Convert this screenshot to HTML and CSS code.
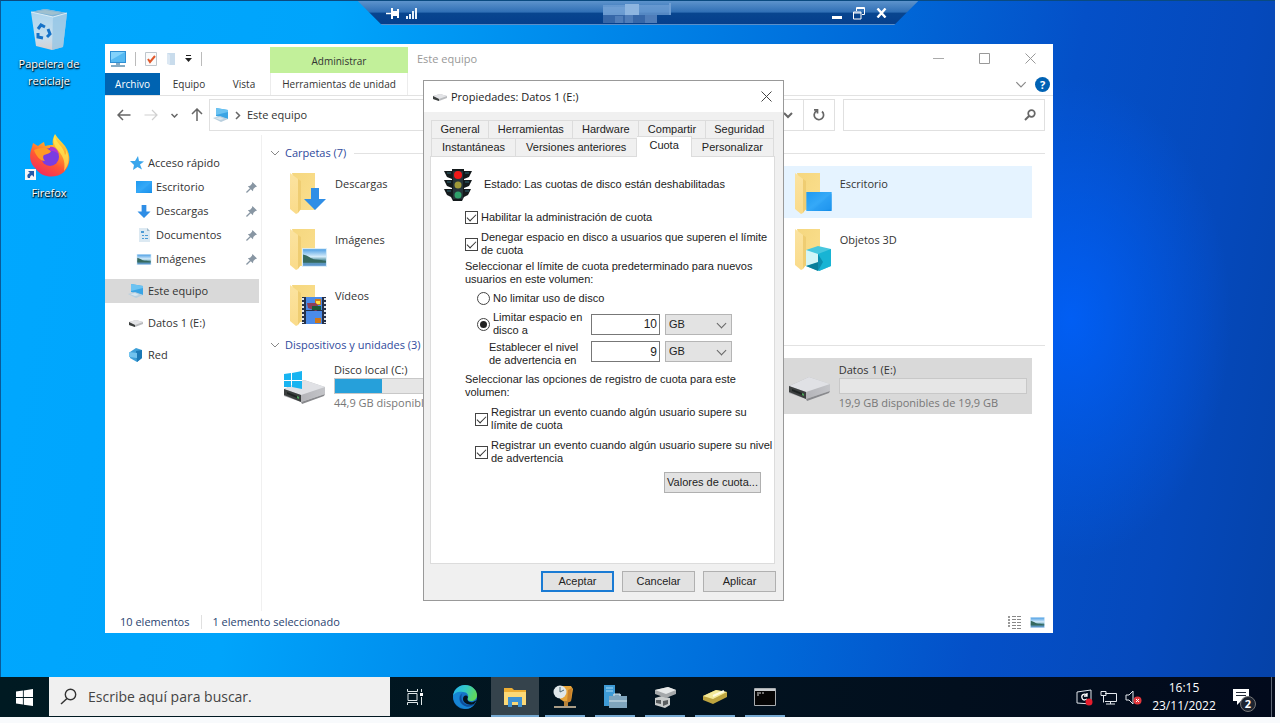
FILE: index.html
```html
<!DOCTYPE html>
<html lang="es">
<head>
<meta charset="utf-8">
<title>Propiedades: Datos 1 (E:)</title>
<link rel="stylesheet" href="styles.css">
</head>
<body>
<svg class="defs" aria-hidden="true">
  <defs>
    <linearGradient id="gFolder" x1="0" y1="0" x2="1" y2="1"><stop offset="0" stop-color="#f5d77f"/><stop offset="1" stop-color="#fbdf8e"/></linearGradient>
    <linearGradient id="gFlap" x1="0" y1="0" x2="0" y2="1"><stop offset="0" stop-color="#fbe3a0"/><stop offset="1" stop-color="#fadb8a"/></linearGradient>
    <linearGradient id="gScreen" x1="0" y1="0" x2="1" y2="1"><stop offset="0" stop-color="#1f9af0"/><stop offset=".5" stop-color="#35a9f8"/><stop offset="1" stop-color="#118ae6"/></linearGradient>
    <linearGradient id="gPhoto" x1="0" y1="0" x2="0" y2="1"><stop offset="0" stop-color="#4f9fe4"/><stop offset=".45" stop-color="#d5ecfa"/><stop offset=".65" stop-color="#5c97a5"/><stop offset="1" stop-color="#5b95d0"/></linearGradient>
    <linearGradient id="gDisk" x1="0" y1="0" x2="1" y2="0"><stop offset="0" stop-color="#a8a8ad"/><stop offset="1" stop-color="#c4c5c9"/></linearGradient>
    <linearGradient id="gFox" x1=".8" y1="0" x2=".3" y2="1"><stop offset="0" stop-color="#fff04a"/><stop offset=".35" stop-color="#ffa52a"/><stop offset=".65" stop-color="#ff5634"/><stop offset="1" stop-color="#f02a5f"/></linearGradient>
    <linearGradient id="gBin" x1="0" y1="0" x2="0" y2="1"><stop offset="0" stop-color="#a8d3ee"/><stop offset=".7" stop-color="#c8dfee"/><stop offset="1" stop-color="#d6cfd0"/></linearGradient>
    <linearGradient id="gEdge" x1="0" y1=".2" x2="1" y2=".5"><stop offset="0" stop-color="#25b5ea"/><stop offset=".5" stop-color="#35c9c5"/><stop offset="1" stop-color="#62d957"/></linearGradient>

    <symbol id="folder" viewBox="0 0 40 44">
      <path d="M4 1h23v37H12z" fill="url(#gFolder)"/>
      <path d="M2 1l8 6v34l-2 1-6-5z" fill="url(#gFlap)"/>
      <path d="M10 7v34l3-4V9z" fill="#efcd72"/>
    </symbol>
    <symbol id="screen" viewBox="0 0 16 12"><path d="M0 0h16v12H0z" fill="url(#gScreen)"/><path d="M16 1v10L4 12z" fill="#2a9ef3" opacity=".5"/></symbol>
    <symbol id="down" viewBox="0 0 22 22"><path d="M7 0h8v11h7L11 22 0 11h7z" fill="#2f8ee6"/></symbol>
    <symbol id="photo" viewBox="0 0 24 18">
      <path d="M0 0h24v18H0z" fill="#d7ecf9"/><path d="M1 1h22v16H1z" fill="url(#gPhoto)"/>
      <path d="M1 6c5 1 7 4 12 5 4 0 7 1 10 1v2H1z" fill="#35695f"/>
    </symbol>
    <symbol id="disk" viewBox="0 0 42 28">
      <path d="M0 12L20 3l21 7v7L17 25 0 19z" fill="url(#gDisk)"/>
      <path d="M0 12L20 3l21 7-24 8z" fill="#e0e1e5"/>
      <path d="M0 12l17 6v7L0 18z" fill="#3c3f3f"/><path d="M3 15l10 4v2L3 17z" fill="#1f2423"/><path d="M13 19l2 1v2l-2-1z" fill="#4aa457"/>
      <path d="M17 25l24-8-1 2-22 8z" fill="#88898d"/>
    </symbol>
    <symbol id="disk-small" viewBox="0 0 14 8">
      <path d="M0 3l7-2 7 2v2L6 8 0 6z" fill="#b9bbbe"/><path d="M0 3l7-2 7 2-8 3z" fill="#e3e4e7"/><path d="M0 3l6 3v2L0 6z" fill="#3b3f3e"/>
    </symbol>
    <symbol id="pc" viewBox="0 0 16 16">
      <path d="M3 1l12 2v9L3 9z" fill="#3aa4e4"/><path d="M3 1l12 2v2L3 8z" fill="#6cc3f2"/>
      <path d="M0 11l7-2 8 3-7 3z" fill="#b9cfde"/><path d="M2 11l5-1 4 2-4 1z" fill="#d9e6ee"/>
    </symbol>
    <symbol id="pin" viewBox="0 0 12 12"><path d="M7 0l5 5-2 .6-2 2L7.600 10 5.200 7.900 1 12 0 11l4.200-4.200L2 4.500 4.500 4 6.500 2z" fill="#8896a3"/></symbol>
    <symbol id="chev" viewBox="0 0 10 6"><path d="M1 1l4 4 4-4" fill="none" stroke="currentColor"/></symbol>
    <symbol id="winlogo" viewBox="0 0 16 16"><path d="M0 2.300l6.500-.9v6.200H0zM7.300 1.300L16 0v7.600H7.300zM0 8.400h6.500v6.200L0 13.700zM7.300 8.400H16V16l-8.700-1.200z" fill="currentColor"/></symbol>
  </defs>
</svg>

<main class="desktop">
  <a class="shortcut shortcut-bin" href="#bin">
    <svg width="42" height="44" viewBox="0 0 42 44">
      <path d="M3 4l14-3 22 4-4 34-11 3-16-4z" fill="url(#gBin)"/>
      <path d="M3 4l14-3 22 4-14 4z" fill="#7fb4d6"/><path d="M7 4l10-2 17 3-10 2z" fill="#9fc0cf"/>
      <path d="M25 9l14-4-4 34-11 3z" fill="#93c4e4" opacity=".75"/>
      <path d="M3 4l22 5 14-4" fill="none" stroke="#dcecf5"/>
      <g fill="none" stroke="#1672c8" stroke-width="3"><path d="M10 21l3-4 4 2M20 21l2 5-3 3M15 30l-5-1 0-4"/></g>
    </svg>
    <span>Papelera de reciclaje</span>
  </a>
  <a class="shortcut shortcut-firefox" href="#firefox">
    <svg width="48" height="48" viewBox="0 0 48 48">
      <path d="M30 1c3 5 6 7 10 12 7 10 5 20-1 26-8 7-22 6-28-3C4 30 4 21 7 14l1-4 5 3c2-2 4-3 6-4l1 4c3-1 5-1 8-1-1-4 0-7 2-11z" fill="url(#gFox)"/>
      <circle cx="25" cy="24" r="9" fill="#7a3de0"/>
      <path d="M9 17c5-2 8-2 12-2l5 3c-1 3-5 3-7 4-2 2 0 5 1 6-5 0-9-5-11-11z" fill="#ff9a25"/>
      <path d="M25 14c5-1 8 3 9 8-3-4-6-4-9-4z" fill="#b136cf"/>
      <path d="M30 2c0 8 9 11 10 20 2-2 1-4 0-7 5 8 5 16-1 23 2-11-2-16-7-22-4-5-4-9-2-14z" fill="#fff15a" opacity=".65"/>
      <path d="M0 36h11v11H0z" fill="#f4f6f8"/><path d="M3 38h6v6l-2-2c-2 1-2 2-2 3H3c-1-2-1-4 2-5z" fill="#2459a8"/>
    </svg>
    <span>Firefox</span>
  </a>

  <section class="explorer" aria-label="Este equipo">
    <header class="titlebar">
      <div class="quick">
        <svg width="18" height="16" viewBox="0 0 18 16"><path d="M1 0h16v12H1z" fill="#2f8fd4"/><path d="M2 1h14v10H2z" fill="#55b9f2"/><path d="M2 1h14L2 9z" fill="#83d2fb"/><path d="M7 12h4v2H7zM2 14h14v2H2z" fill="#85abc4"/></svg>
        <i class="bar"></i>
        <svg class="q-check" width="12" height="14" viewBox="0 0 12 14"><path d="M.5.500h11v13H.500z" fill="#fbfbfb" stroke="#bfc6cc"/><path d="M3 7l2 3 5-6" fill="none" stroke="#e0592c" stroke-width="2"/></svg>
        <svg width="10" height="14" viewBox="0 0 10 14"><path d="M1 1h8v12H3z" fill="#c9dcec"/><path d="M1 1l3 2v10l-3-1z" fill="#dce8f3"/></svg>
        <svg width="7" height="7" viewBox="0 0 7 7"><path d="M1 0h5v1H1zM0 3h7L3.500 7z" fill="#222"/></svg>
        <i class="bar"></i>
      </div>
      <div class="context-title">Administrar</div>
      <h1>Este equipo</h1>
      <div class="caption">
        <button aria-label="Minimizar"><svg width="11" height="11" viewBox="0 0 11 11"><path d="M0 5.500h11" stroke="#aaa"/></svg></button>
        <button aria-label="Maximizar"><svg width="11" height="11" viewBox="0 0 11 11"><path d="M.5.500h10v10H.500z" fill="none" stroke="#999"/></svg></button>
        <button aria-label="Cerrar"><svg width="11" height="11" viewBox="0 0 11 11"><path d="M.5.500l10 10M10.500.500l-10 10" stroke="#999"/></svg></button>
      </div>
    </header>
    <nav class="ribbon">
      <button class="file-tab">Archivo</button>
      <button class="tab-equipo">Equipo</button>
      <button class="tab-vista">Vista</button>
      <button class="tab-tools">Herramientas de unidad</button>
      <span class="grow"></span>
      <svg class="ribbon-chev" width="12" height="7"><use href="#chev"/></svg>
      <button class="help" aria-label="Ayuda">?</button>
    </nav>
    <div class="address">
      <div class="arrows">
        <svg width="14" height="12" viewBox="0 0 14 12"><path d="M13.500 6H1M6 1L1 6l5 5" fill="none" stroke="#666" stroke-width="1.500"/></svg>
        <svg width="14" height="12" viewBox="0 0 14 12"><path d="M.5 6H13M8 1l5 5-5 5" fill="none" stroke="#d0d0d0" stroke-width="1.200"/></svg>
        <svg width="7" height="5" viewBox="0 0 7 5"><path d="M.5 1l3 3 3-3" fill="none" stroke="#666" stroke-width="1.500"/></svg>
        <svg width="12" height="14" viewBox="0 0 12 14"><path d="M6 13V1M1 6l5-5 5 5" fill="none" stroke="#666" stroke-width="1.500"/></svg>
      </div>
      <div class="path">
        <svg width="16" height="16"><use href="#pc"/></svg>
        <svg width="6" height="9" viewBox="0 0 6 9"><path d="M1 1l3.500 3.500L1 8" fill="none" stroke="#666" stroke-width="1.500"/></svg>
        <span>Este equipo</span>
        <span class="grow"></span>
        <svg width="10" height="7" viewBox="0 0 10 7"><path d="M1 1l4 4 4-4" fill="none" stroke="#666" stroke-width="2"/></svg>
        <button class="refresh" aria-label="Actualizar"><svg width="12" height="12" viewBox="0 0 12 12"><path d="M9 2.500A4.700 4.700 0 1 1 3.500 2M1 .8h3.500v3.700" fill="none" stroke="#666" stroke-width="1.700"/></svg></button>
      </div>
      <div class="search">
        <input type="text" aria-label="Buscar en Este equipo">
        <svg width="12" height="12" viewBox="0 0 12 12"><circle cx="7.500" cy="4.500" r="3.300" fill="none" stroke="#666" stroke-width="1.700"/><path d="M5 7L1 11" stroke="#666" stroke-width="2"/></svg>
      </div>
    </div>
    <div class="panes">
      <nav class="tree">
        <a href="#rapido"><svg width="14" height="14" viewBox="0 0 14 14"><path d="M8 0l1 5 5 .5-4 3 2 5-4.500-2.500L3 14l1-5-4-4 5 0z" fill="#3aa6ec"/></svg>Acceso rápido</a>
        <a class="sub" href="#escritorio"><svg width="16" height="12"><use href="#screen"/></svg>Escritorio<svg class="pin" width="11" height="11"><use href="#pin"/></svg></a>
        <a class="sub" href="#descargas"><svg width="16" height="13"><use href="#down"/></svg>Descargas<svg class="pin" width="11" height="11"><use href="#pin"/></svg></a>
        <a class="sub" href="#documentos"><svg width="16" height="14" viewBox="0 0 16 14"><path d="M3 0h8l3 3v11H3z" fill="#dce9f2"/><path d="M11 0v3h3z" fill="#9fb9cb"/><path d="M5 3h3v2H5zM6 7h2v1H6zM9 7h3v1H9zM6 10h2v1H6zM9 10h3v1H9z" fill="#4d9bd5"/></svg>Documentos<svg class="pin" width="11" height="11"><use href="#pin"/></svg></a>
        <a class="sub" href="#imagenes"><svg width="16" height="11"><use href="#photo"/></svg>Imágenes<svg class="pin" width="11" height="11"><use href="#pin"/></svg></a>
        <a class="root current" href="#equipo"><svg width="16" height="16"><use href="#pc"/></svg>Este equipo</a>
        <a class="root" href="#datos"><svg width="16" height="8"><use href="#disk-small"/></svg>Datos 1 (E:)</a>
        <a class="root" href="#red"><svg width="16" height="14" viewBox="0 0 16 14"><path d="M2 4l6-4 6 2v8l-5 4-7-4z" fill="#3d9fd8"/><path d="M8 3l6-1v8l-5 4z" fill="#1b79b6"/><path d="M1 4l8 1v5l-8-1z" fill="#72c3ee"/></svg>Red</a>
      </nav>
      <div class="files">
        <h2><svg width="10" height="6"><use href="#chev"/></svg>Carpetas (7)</h2>
        <div class="grid">
          <a class="item" href="#i1"><svg width="40" height="44" viewBox="0 0 40 44"><use href="#folder" width="40" height="44"/><use href="#down" x="16" y="16" width="22" height="22"/></svg><span>Descargas</span></a>
          <a class="item third hover" href="#i2"><svg width="40" height="44" viewBox="0 0 40 44"><use href="#folder" width="40" height="44"/><use href="#screen" x="13" y="20" width="26" height="19"/></svg><span>Escritorio</span></a>
          <a class="item first" href="#i3"><svg width="40" height="44" viewBox="0 0 40 44"><use href="#folder" width="40" height="44"/><use href="#photo" x="14" y="20" width="25" height="19"/></svg><span>Imágenes</span></a>
          <a class="item third" href="#i4"><svg width="40" height="44" viewBox="0 0 40 44"><use href="#folder" width="40" height="44"/><path d="M13 22l12-4 13 3v17l-12 5-13-5z" fill="#48c7de"/><path d="M13 22l12 4v9l-12 3z" fill="#d3f5f7"/><path d="M25 26l13-5v17l-12 5z" fill="#18b4d4"/><path d="M13 38l12-4v9z" fill="#087f9b"/><path d="M25 26l5 8-5 9z" fill="#0d8fb0"/></svg><span>Objetos 3D</span></a>
          <a class="item first" href="#i5"><svg width="40" height="44" viewBox="0 0 40 44"><use href="#folder" width="40" height="44"/><path d="M14 13h24v27H14z" fill="#263149"/><path d="M18 13h16v13H18zM18 27h16v13H18z" fill="#4b8be8"/><path d="M15 14v25M37 14v25" stroke="#dfe6ee" stroke-width="2" stroke-dasharray="2 2"/><path d="M27 15h6v6h-6zM27 34h6v5h-6z" fill="#cf7718"/><path d="M28 17h4v3h-4z" fill="#ffe14a"/><path d="M19 19h9l4 5-4 3-8-3z" fill="#8d3f59"/><path d="M24 22h9v4h-9z" fill="#1d5a39"/></svg><span>Vídeos</span></a>
        </div>
        <h2><svg width="10" height="6"><use href="#chev"/></svg>Dispositivos y unidades (3)</h2>
        <div class="grid drives">
          <a class="item" href="#c"><svg width="42" height="34" viewBox="0 0 42 34"><use href="#disk" y="6" width="42" height="28"/><path d="M0 3l7-1v7H0zM8 2l10-2v9H8zM0 10h7v6H0zM8 10h10v8L8 16z" fill="#18b4f1"/></svg><span class="drive"><span>Disco local (C:)</span><span class="usage" role="meter" aria-label="Espacio usado en C:" aria-valuenow="25"><i style="width:25%"></i></span><small>44,9 GB disponibles</small></span></a>
          <a class="item third selected" href="#e"><svg width="42" height="28"><use href="#disk"/></svg><span class="drive"><span>Datos 1 (E:)</span><span class="usage" role="meter" aria-label="Espacio usado en E:" aria-valuenow="0"><i style="width:0%"></i></span><small>19,9 GB disponibles de 19,9 GB</small></span></a>
        </div>
      </div>
    </div>
    <footer class="status">
      <span>10 elementos</span><i></i><span>1 elemento seleccionado</span><span class="grow"></span>
      <svg width="15" height="14" viewBox="0 0 15 14"><path d="M2 1v12" stroke="#999" stroke-width="2" stroke-dasharray="2 1"/><path d="M5 1.500h10M5 4.500h10M5 7.500h10M5 10.500h10M5 13.500h10" stroke="#888" stroke-dasharray="4 1"/></svg>
      <svg width="15" height="11"><use href="#photo"/></svg>
    </footer>
  </section>

  <section class="dialog" role="dialog" aria-label="Propiedades: Datos 1 (E:)">
    <header>
      <svg width="14" height="8"><use href="#disk-small"/></svg>
      <h2>Propiedades: Datos 1 (E:)</h2>
      <button aria-label="Cerrar"><svg width="11" height="11" viewBox="0 0 11 11"><path d="M.5.500l10 10M10.500.500l-10 10" stroke="#444"/></svg></button>
    </header>
    <div class="sheet">
      <div class="tabs tabs-back" role="tablist"><button role="tab">General</button><button role="tab">Herramientas</button><button role="tab">Hardware</button><button role="tab">Compartir</button><button role="tab">Seguridad</button></div>
      <div class="tabs tabs-front" role="tablist"><button role="tab">Instantáneas</button><button role="tab">Versiones anteriores</button><button role="tab" aria-selected="true" class="active">Cuota</button><button role="tab">Personalizar</button></div>
      <form class="panel">
        <div class="state">
          <svg width="28" height="34" viewBox="0 0 28 34">
            <path d="M8 1h12v2h8l-3 6-5 2v1h8l-3 6-5 2v1h7l-3 6-4 2-2 4H9l-2-4-4-2-3-6h8v-1l-5-2-3-6h8v-1L3 9 0 3h8z" fill="#141a1c"/>
            <path d="M9 3h10v28H9z" fill="#26343a"/>
            <circle cx="14" cy="7" r="4" fill="#f01818"/><circle cx="14" cy="17" r="3.500" fill="#a09a38"/><circle cx="14" cy="27" r="3.500" fill="#2fa06a"/><path d="M3 5h4M3 14h4M3 23h4M21 5h4M21 14h4M21 23h4" stroke="#2f6673"/>
          </svg>
          <span>Estado: Las cuotas de disco están deshabilitadas</span>
        </div>
        <label class="check enable"><input type="checkbox" checked><span>Habilitar la administración de cuota</span></label>
        <label class="check deny"><input type="checkbox" checked><span>Denegar espacio en disco a usuarios que superen el límite<br>de cuota</span></label>
        <p class="intro">Seleccionar el límite de cuota predeterminado para nuevos<br>usuarios en este volumen:</p>
        <label class="check radio"><input type="radio" name="limit"><span>No limitar uso de disco</span></label>
        <div class="limit">
          <label class="check"><input type="radio" name="limit" checked><span>Limitar espacio en<br>disco a</span></label>
          <input type="text" value="10" aria-label="Límite de espacio">
          <span class="select"><select aria-label="Unidad del límite"><option>GB</option></select></span>
        </div>
        <div class="limit warn">
          <label for="warn">Establecer el nivel<br>de advertencia en</label>
          <input type="text" id="warn" value="9">
          <span class="select"><select aria-label="Unidad de advertencia"><option>GB</option></select></span>
        </div>
        <p class="log">Seleccionar las opciones de registro de cuota para este<br>volumen:</p>
        <label class="check event"><input type="checkbox" checked><span>Registrar un evento cuando algún usuario supere su<br>límite de cuota</span></label>
        <label class="check event"><input type="checkbox" checked><span>Registrar un evento cuando algún usuario supere su nivel<br>de advertencia</span></label>
        <button type="button" class="btn values">Valores de cuota...</button>
      </form>
    </div>
    <footer><button class="btn default">Aceptar</button><button class="btn">Cancelar</button><button class="btn">Aplicar</button></footer>
  </section>

  <div class="remote">
    <svg width="13" height="11" viewBox="0 0 13 11"><path d="M0 5.500h5" stroke="#fff" stroke-width="1.500"/><path d="M5 0h2v3h4V1h2v9h-2V8H7v3H5z" fill="#fff"/></svg>
    <svg width="12" height="11" viewBox="0 0 12 11"><path d="M0 8h2v3H0zM3 6h2v5H3zM6 3h2v8H6zM9 0h2v11H9z" fill="#e8f1fa"/></svg>
    <svg class="mosaic" width="76" height="20" viewBox="0 0 76 20"><path d="M0 4h22v8H0zM66 0h2v12h-2z" fill="#7fa8d8" opacity=".7"/><path d="M0 2h68v10H0z" fill="#6f9fd4" opacity=".75"/><path d="M22 1h14v11H22z" fill="#8db5e0"/><path d="M0 12h54v8H0z" fill="#3667a8"/><path d="M12 13h8v7h-8zM22 12h8v8h-8zM42 12h12v8H42z" fill="#4f7db9"/></svg>
    <svg width="10" height="11" viewBox="0 0 10 11"><path d="M0 8h10v3H0z" fill="#fff"/></svg>
    <svg width="12" height="13" viewBox="0 0 12 13"><path d="M3.500 4V.500h8v7H9M.5 5h7.500v7H.500zM3 1.500h8M0 6h8" fill="none" stroke="#fff"/></svg>
    <svg width="11" height="10" viewBox="0 0 11 10"><path d="M1.500.500l8 9M9.500.500l-8 9" stroke="#fff" stroke-width="2.400"/></svg>
  </div>
</main>

<footer class="taskbar">
  <button class="start" aria-label="Inicio"><svg width="17" height="17"><use href="#winlogo"/></svg></button>
  <label class="tb-search"><svg width="17" height="17" viewBox="0 0 17 17"><circle cx="10.500" cy="6.500" r="5.200" fill="none" stroke="#333" stroke-width="1.400"/><path d="M7 10.500L1 16" stroke="#333" stroke-width="1.500"/></svg><input type="text" placeholder="Escribe aquí para buscar." aria-label="Buscar"></label>
  <div class="apps">
    <button aria-label="Vista de tareas"><svg width="18" height="16" viewBox="0 0 18 16"><path d="M2 4.500h9v7H2zM1.500 0v2.500h10V0M1.500 16v-2.500h10V16M15.500 0v3M15.500 8v8" fill="none" stroke="#dfe6e8"/><path d="M14 4h3v3h-3z" fill="#fff"/></svg></button>
    <button aria-label="Edge"><svg width="26" height="26" viewBox="0 0 26 26"><circle cx="13" cy="13" r="12" fill="#1574c8"/><path d="M1 12C2 5 7 1 13 1c7 0 12 5 12 10 0 4-3 6-6 6s-4-1-3-3c1-3-1-6-5-6-5 0-9 2-10 4z" fill="url(#gEdge)"/><path d="M11 8c-4 2-5 6-3 10 2 4 7 6 14 3-3 4-9 5-14 2-4-2-7-6-7-11 2-4 6-5 10-4z" fill="#1685d4"/><path d="M10 10c-2 5 1 10 6 11 2 0 4 0 7-2-5 7-13 3-15-2-1-3 0-6 2-7z" fill="#0d4d9c"/><path d="M16 13c-2 3 1 6 5 5l4-2-3 4c-5 2-11-1-11-5 0-3 3-5 5-2z" fill="#05131e"/></svg></button>
    <button class="open active" aria-label="Explorador de archivos"><svg width="22" height="20" viewBox="0 0 22 20"><path d="M0 1h8l2 2h12v15H0z" fill="#edae34"/><path d="M0 5h22v13H0z" fill="#fcd976"/><path d="M4 10h14v10h-4v-5H8v5H4z" fill="#3f92d2"/></svg></button>
    <button class="open" aria-label="Programador"><svg width="24" height="26" viewBox="0 0 24 26"><path d="M7 2h11l2 3-2 12-5 2-6-4z" fill="#e8a53a"/><path d="M15 6l4-2-1 13-4 2z" fill="#c8812a"/><circle cx="7" cy="8" r="6.500" fill="#dfe7ea"/><path d="M7 3v5l4-2" fill="none" stroke="#4d6874"/><path d="M11 17h4v5h-4z" fill="#b78238"/><path d="M1 22h22v2H1z" fill="#a99c86"/></svg></button>
    <button class="open" aria-label="Administrador del servidor"><svg width="26" height="24" viewBox="0 0 26 24"><path d="M2 0h11v21H2z" fill="#3e9bd6"/><path d="M4 3h7M4 6h7" stroke="#a7daf6"/><path d="M11 11V9h8v2h6v12H7V11z" fill="#7fa5bd"/><path d="M7 16h18" stroke="#d5e6ee"/><path d="M12 11V9h6v2" fill="none" stroke="#d5e6ee"/></svg></button>
    <button class="open" aria-label="Almacenamiento"><svg width="24" height="22" viewBox="0 0 24 22"><path d="M2 12l7-2 8 2v7l-5 3-10-3z" fill="#c9cccc"/><path d="M3 14h5v4l-5-1zM10 15l5-1v4l-5 2z" fill="#5a5e60"/><path d="M2 4l13-3 8 3v4l-10 4-11-4z" fill="#a5a8aa"/><path d="M2 4l13-3 8 3-10 4z" fill="#e6e8e8"/></svg></button>
    <button class="open" aria-label="Disco"><svg width="26" height="18" viewBox="0 0 26 18"><path d="M1 8L14 2l11 2v5L11 16 1 12z" fill="#bda43f"/><path d="M1 8L14 2l11 2-14 7z" fill="#f3e999"/><path d="M11 8l11-5" stroke="#fffbe0" stroke-width="2"/></svg></button>
    <button class="open" aria-label="Símbolo del sistema"><svg width="22" height="18" viewBox="0 0 22 18"><path d="M.5.500h21v17H.500z" fill="#050505" stroke="#a9adb0"/><path d="M1 1h20v2H1z" fill="#c9cdd0"/><path d="M3 5h4M3 7h2M8 5h2" stroke="#ddd"/></svg></button>
  </div>
  <div class="tray">
    <svg width="17" height="17" viewBox="0 0 17 17"><path d="M1 3l14-2v14L1 14z" fill="none" stroke="#dfe4ea"/><path d="M11 6c-3-2-6 0-5 3s3 2 5 1M11 4v3H8" fill="none" stroke="#fff" stroke-width="1.300"/><circle cx="13" cy="13" r="3.500" fill="#e51c2c"/></svg>
    <svg width="18" height="15" viewBox="0 0 18 15"><path d="M5 3.500h11.500v8H5M1 1.500h5v4H1zM3.500 6v6.500M10.500 12v2M6 14h9" fill="none" stroke="#e4e8ee"/></svg>
    <svg width="17" height="15" viewBox="0 0 17 15"><path d="M1 5h3l4-4v13L4 10H1z" fill="none" stroke="#e4e8ee"/><circle cx="12.500" cy="10.500" r="4" fill="#e2363c"/><path d="M11 9l3 3M14 9l-3 3" stroke="#fff"/></svg>
    <time class="clock">16:15<br>23/11/2022</time>
    <button class="notices" aria-label="Notificaciones"><svg width="18" height="18" viewBox="0 0 18 18"><path d="M1 1h16v12H9l-4 4v-4H1z" fill="#fff"/><path d="M4 4.500h10M4 7.500h10" stroke="#222a38"/></svg><b>2</b></button>
  </div>
</footer>
</body>
</html>
```
FILE: styles.css
```css
* { box-sizing: border-box; }
body {
  margin: 0;
  height: 100vh;
  padding: 0 5px 6px 0;
  display: flex;
  flex-direction: column;
  background: #f8fafc;
  font: 11px/16px "Open Sans", "Noto Sans", sans-serif;
  color: #333;
}
button, input, select { font: inherit; color: inherit; margin: 0; }
button { padding: 0; border: 0; background: none; }
a { color: inherit; text-decoration: none; }
svg { display: block; flex: none; }
h1, h2, p { margin: 0; font-size: 11px; font-weight: 400; }
.defs { position: absolute; width: 0; height: 0; }
.grow { flex: 1; }

.desktop {
  position: relative;
  flex: 1;
  overflow: hidden;
  border-top: 1px solid #0a4a80;
  border-left: 1px solid #0a5a98;
  background:
    radial-gradient(ellipse 160px 240px at 84% 47%, rgba(0, 98, 255, .8), rgba(0, 98, 255, 0)),
    linear-gradient(100deg, #00a8ff 0%, #00a4fb 24%, #0085e8 45%, #0068d8 64%, #0450c8 78%, #0549bc 90%, #0542a8 100%);
}

/* Desktop shortcuts */
.shortcut {
  position: absolute;
  left: 10px;
  width: 76px;
  display: flex;
  flex-direction: column;
  align-items: center;
  gap: 3px;
  color: #fff;
  text-align: center;
  line-height: 17px;
  text-shadow: 0 1px 2px #000, 1px 1px 1px #012;
}
.shortcut-bin { top: 7px; }
.shortcut-firefox { top: 132px; }

/* Remote session bar */
.remote {
  position: absolute;
  top: 0;
  left: 28%;
  width: 44%;
  height: 24px;
  padding: 0 31px 0 28px;
  display: flex;
  align-items: center;
  gap: 7px;
  clip-path: polygon(0 0, 100% 0, calc(100% - 24px) 100%, 24px 100%);
  background: linear-gradient(#5d93cc, #3170b6 45%, #08458f 52%, #053f8c 94%, #5b8fc9 95%);
}
.remote .mosaic { margin: 0 146px 0 auto; }
.remote svg:nth-last-child(-n+2) { margin-left: 4px; }

/* Explorer window */
.explorer {
  position: absolute;
  top: 43px;
  right: 222px;
  bottom: 44px;
  left: 104px;
  display: flex;
  flex-direction: column;
  background: #fff;
}
.titlebar { display: flex; height: 29px; align-items: center; }
.quick { width: 165px; display: flex; align-items: center; gap: 9px; padding-left: 4px; }
.quick .bar { width: 1px; height: 14px; background: #bbb; }
.quick .bar:first-of-type { margin-left: -1px; }
.context-title { width: 138px; height: 26px; align-self: flex-end; text-align: center; line-height: 28px; background: #c2f09a; font-size: 10px; }
.titlebar h1 { margin-left: 9px; flex: 1; color: #999; }
.caption { display: flex; }
.caption button { width: 46px; height: 28px; display: grid; place-items: center; }
.ribbon { display: flex; align-items: center; height: 23px; border-bottom: 1px solid #e2e2e2; font-size: 10px; }
.ribbon button { height: 22px; }
.ribbon .file-tab { width: 55px; background: #0063b1; color: #fff; }
.ribbon .tab-equipo { width: 58px; }
.ribbon .tab-vista { width: 52px; }
.ribbon .tab-tools { width: 138px; border: solid #ececec; border-width: 0 1px; }
.ribbon-chev { color: #888; }
.ribbon .help { width: 15px; height: 15px; margin: 0 3px 0 8px; border-radius: 50%; background: #0062b4; color: #fff; font-size: 11px; font-weight: 700; line-height: 15px; }
.address { display: flex; padding: 3px 8px 4px 12px; gap: 6px; }
.arrows { width: 86px; display: flex; align-items: center; justify-content: space-between; }
.path, .search { display: flex; align-items: center; height: 32px; border: 1px solid #e0e0e0; }
.path { flex: 1; gap: 6px; padding-left: 3px; margin-right: 2px; }
.path .refresh { width: 31px; height: 30px; margin-left: 4px; display: grid; place-items: center; border-left: 1px solid #e0e0e0; }
.search { width: 202px; padding-right: 8px; }
.search input { flex: 1; min-width: 0; border: 0; outline: 0; background: none; }

.panes { flex: 1; min-height: 0; display: flex; }
.tree { width: 157px; padding: 16px 2px 0 0; border-right: 1px solid #f0f0f0; display: flex; flex-direction: column; }
.tree a { display: flex; align-items: center; height: 24px; gap: 4px; padding-left: 25px; }
.tree .sub { padding-left: 31px; }
.tree .root { margin-top: 8px; padding-left: 23px; }
.tree .current { background: #d9d9d9; }
.tree .pin { margin: 0 2px 0 auto; }

.files { flex: 1; min-width: 0; padding: 10px 8px 0; }
.files h2 { display: flex; align-items: center; gap: 5px; height: 16px; color: #2f4a9c; white-space: nowrap; }
.files h2 svg { color: #888; }
.files h2::after { content: ""; flex: 1; height: 1px; margin-left: 3px; background: #e2e2e2; }
.grid { display: grid; grid-template-columns: repeat(3, 1fr); gap: 4px 0; padding: 5px 13px 7px 5px; }
.item { display: flex; gap: 7px; height: 52px; padding: 6px 5px 0 13px; white-space: nowrap; min-width: 0; }
.item > span { padding-top: 4px; }
.item.first { grid-column: 1; }
.item.third { grid-column: 3; }
.item.hover { background: #e5f3ff; }
.item.selected { background: #d9d9d9; }
.drives .item { height: 56px; padding: 4px 5px 0 9px; gap: 8px; }
.drives .item > svg { align-self: center; }
.drives .item > .drive { flex: 1; min-width: 0; padding: 0; display: flex; flex-direction: column; }
.drive small { font-size: 11px; color: #777; line-height: 18px; }
.usage { height: 16px; flex: none; border: 1px solid #c8c8c8; background: #e6e6e6; }
.usage i { display: block; height: 100%; background: #26a0da; }
.status { height: 22px; display: flex; align-items: center; gap: 8px; padding: 0 8px 0 15px; color: #2a4470; }
.status i { width: 1px; height: 14px; margin: 0 2px 0 4px; background: #e0e0e0; }

/* Properties dialog */
.dialog {
  position: absolute;
  top: 79px;
  left: 422px;
  width: 361px;
  border: 1px solid #999;
  background: #f0f0f0;
  font: 11px/13px "Liberation Sans", Arial, sans-serif;
  color: #222;
  white-space: nowrap;
}
.dialog header { display: flex; align-items: center; height: 31px; padding: 0 11px 0 9px; gap: 4px; background: #fff; }
.dialog header h2 { flex: 1; font: 11px/16px "Open Sans", sans-serif; }
.sheet { padding: 8px 8px 0 6px; }
.tabs { display: flex; margin: 0 1px; height: 18px; }
.tabs button { border: 1px solid #dcdcdc; border-width: 1px 1px 0 0; background: #f0f0f0; flex: 1 1 auto; }
.tabs button:first-child { border-left-width: 1px; }
.tabs .active { position: relative; margin: -2px 0 -1px; padding: 0 2px 3px; background: #fff; }
.panel { display: flex; flex-direction: column; height: 408px; padding: 11px 13px; border: 1px solid #dcdcdc; background: #fff; }
.state { display: flex; align-items: center; gap: 12px; height: 33px; }
.check { display: flex; align-items: center; gap: 3px; }
.check input { appearance: none; flex: none; width: 13px; height: 13px; border: 1px solid #444; background: #fff; display: grid; place-items: center; }
.check input[type="checkbox"]:checked::after { content: ""; width: 8px; height: 4px; border: solid #333; border-width: 0 0 1px 1px; transform: rotate(-45deg); margin-bottom: 2px; }
.check input[type="radio"] { border-radius: 50%; }
.check input[type="radio"]:checked::after { content: ""; width: 7px; height: 7px; border-radius: 50%; background: #222; }
.enable { margin: 10px 0 0 21px; }
.deny { margin: 7px 0 0 21px; }
.intro { margin: 3px 0 0 21px; }
.radio { margin: 6px 0 0 33px; }
.limit { display: flex; align-items: center; gap: 5px; margin: 6px 0 0 33px; }
.limit > label { width: 109px; }
.limit > input { width: 69px; height: 21px; padding: 0 2px; border: 1px solid #777; text-align: right; background: #fff; font-size: 12px; }
.warn { margin-top: 4px; align-items: flex-start; }
.warn > label { padding-left: 12px; }
.select { position: relative; }
.select::after { content: ""; position: absolute; top: 6px; right: 7px; width: 6px; height: 6px; border: solid #666; border-width: 0 1px 1px 0; transform: rotate(45deg); pointer-events: none; }
.select select { appearance: none; display: block; width: 67px; height: 21px; padding: 0 3px; border: 1px solid #b5b5b5; border-radius: 0; background: #e3e3e3; }
.log { margin: 6px 0 0 21px; }
.event { margin: 7px 0 0 31px; }
.btn { width: 73px; height: 21px; border: 1px solid #b0b0b0; background: #e2e2e2; }
.values { width: 97px; margin-top: 7px; align-self: flex-end; }
.btn.default { border: 2px solid #1a7bd4; }
.dialog footer { display: flex; justify-content: flex-end; gap: 8px; padding: 7px 7px 8px; }

/* Taskbar */
.taskbar { display: flex; height: 40px; background: linear-gradient(90deg, #001a22, #021420 50%, #020a1c); color: #fff; }
.start { width: 49px; display: grid; place-items: center; color: #fff; }
.tb-search { width: 341px; margin-bottom: 1px; display: flex; align-items: center; gap: 11px; padding-left: 11px; background: #f0f0f0; }
.tb-search input { flex: 1; min-width: 0; border: 0; padding: 0; outline: 0; background: none; font-size: 14px; }
.tb-search input::placeholder { color: #444; opacity: 1; }
.apps { display: flex; flex: 1; }
.apps button { width: 50px; display: grid; place-items: center; border: solid transparent; border-width: 0 5px; }
.apps .open { background: linear-gradient(#76a9d2, #76a9d2) bottom / 100% 2px no-repeat padding-box; }
.apps .active { border-width: 0 1px; background: linear-gradient(#76a9d2, #76a9d2) bottom / 100% 2px no-repeat padding-box, #35434c padding-box; }
.tray { display: flex; align-items: center; gap: 7px; padding-right: 3px; }
.clock { width: 70px; text-align: center; font-size: 12px; line-height: 18px; }
.notices { position: relative; width: 46px; height: 40px; padding-left: 6px; border-right: 1px solid #5a6473; display: flex; align-items: center; }
.notices b { position: absolute; left: 14px; top: 19px; width: 16px; height: 16px; border: 1px solid #777; border-radius: 50%; background: #1d2430; font-size: 11px; line-height: 14px; }
```
